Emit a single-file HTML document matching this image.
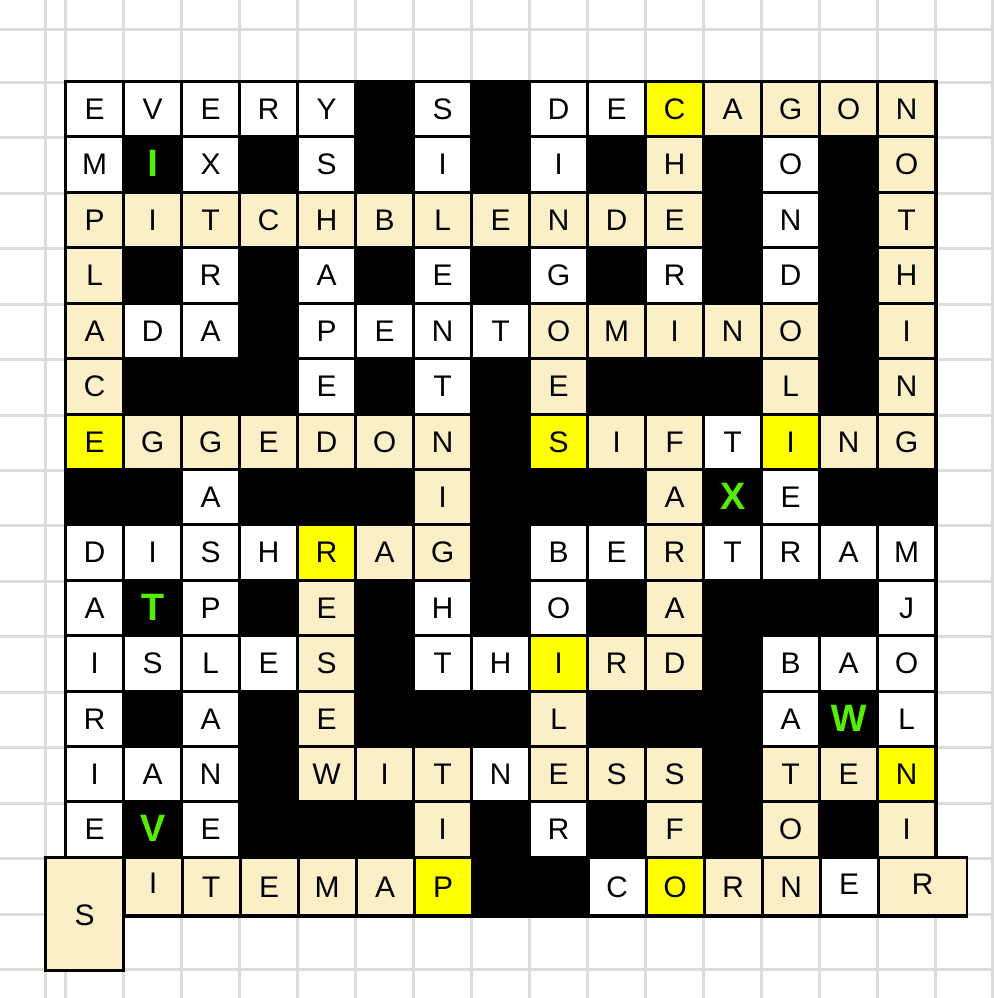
<!DOCTYPE html>
<html><head><meta charset="utf-8"><style>
html,body{margin:0;padding:0;background:#fff;}
body{width:994px;height:998px;position:relative;overflow:hidden;font-family:"Liberation Sans",Arial,sans-serif;}
.vl{position:absolute;top:0;width:3px;height:998px;background:#dcdcdc;}
.hl{position:absolute;left:0;height:3px;width:994px;background:#dcdcdc;}
#board{position:absolute;left:64px;top:80px;width:874px;height:779px;background:#000;}
#grid{position:absolute;left:3px;top:3px;display:grid;grid-template-columns:repeat(15,55px);grid-auto-rows:52.43px;column-gap:3px;row-gap:3px;}
#grid div,.c{font-size:30px;text-align:center;line-height:54px;color:#000;}
.w{background:#fff;}.b{background:#000;}.t{background:#fbefc7;}.y{background:#ffff00;}
#grid div.g{background:#000;color:#55ee00;font-weight:bold;font-size:38px;line-height:52px;}
.c{position:absolute;width:55px;height:55px;line-height:58px;}
</style></head><body>
<div class="vl" style="left:44px"></div>
<div class="vl" style="left:64px"></div><div class="vl" style="left:122px"></div><div class="vl" style="left:180px"></div><div class="vl" style="left:238px"></div><div class="vl" style="left:296px"></div><div class="vl" style="left:354px"></div><div class="vl" style="left:412px"></div><div class="vl" style="left:470px"></div><div class="vl" style="left:528px"></div><div class="vl" style="left:586px"></div><div class="vl" style="left:644px"></div><div class="vl" style="left:702px"></div><div class="vl" style="left:760px"></div><div class="vl" style="left:818px"></div><div class="vl" style="left:876px"></div><div class="vl" style="left:934px"></div><div class="vl" style="left:991px"></div>
<div class="hl" style="top:28px"></div><div class="hl" style="top:81px"></div><div class="hl" style="top:136px"></div><div class="hl" style="top:192px"></div><div class="hl" style="top:247px"></div><div class="hl" style="top:303px"></div><div class="hl" style="top:358px"></div><div class="hl" style="top:414px"></div><div class="hl" style="top:469px"></div><div class="hl" style="top:524px"></div><div class="hl" style="top:580px"></div><div class="hl" style="top:635px"></div><div class="hl" style="top:691px"></div><div class="hl" style="top:746px"></div><div class="hl" style="top:802px"></div><div class="hl" style="top:857px"></div><div class="hl" style="top:913px"></div><div class="hl" style="top:968px"></div>
<div id="board"><div id="grid">
<div class="w">E</div><div class="w">V</div><div class="w">E</div><div class="w">R</div><div class="w">Y</div><div class="b"></div><div class="w">S</div><div class="b"></div><div class="w">D</div><div class="w">E</div><div class="y">C</div><div class="t">A</div><div class="t">G</div><div class="t">O</div><div class="t">N</div>
<div class="w">M</div><div class="g">I</div><div class="w">X</div><div class="b"></div><div class="w">S</div><div class="b"></div><div class="w">I</div><div class="b"></div><div class="w">I</div><div class="b"></div><div class="t">H</div><div class="b"></div><div class="w">O</div><div class="b"></div><div class="t">O</div>
<div class="t">P</div><div class="t">I</div><div class="t">T</div><div class="t">C</div><div class="t">H</div><div class="t">B</div><div class="t">L</div><div class="t">E</div><div class="t">N</div><div class="t">D</div><div class="t">E</div><div class="b"></div><div class="w">N</div><div class="b"></div><div class="t">T</div>
<div class="t">L</div><div class="b"></div><div class="w">R</div><div class="b"></div><div class="w">A</div><div class="b"></div><div class="w">E</div><div class="b"></div><div class="w">G</div><div class="b"></div><div class="w">R</div><div class="b"></div><div class="w">D</div><div class="b"></div><div class="t">H</div>
<div class="t">A</div><div class="w">D</div><div class="w">A</div><div class="b"></div><div class="w">P</div><div class="w">E</div><div class="w">N</div><div class="w">T</div><div class="t">O</div><div class="t">M</div><div class="t">I</div><div class="t">N</div><div class="t">O</div><div class="b"></div><div class="t">I</div>
<div class="t">C</div><div class="b"></div><div class="b"></div><div class="b"></div><div class="w">E</div><div class="b"></div><div class="w">T</div><div class="b"></div><div class="t">E</div><div class="b"></div><div class="b"></div><div class="b"></div><div class="t">L</div><div class="b"></div><div class="t">N</div>
<div class="y">E</div><div class="t">G</div><div class="t">G</div><div class="t">E</div><div class="t">D</div><div class="t">O</div><div class="t">N</div><div class="b"></div><div class="y">S</div><div class="t">I</div><div class="t">F</div><div class="w">T</div><div class="y">I</div><div class="t">N</div><div class="t">G</div>
<div class="b"></div><div class="b"></div><div class="w">A</div><div class="b"></div><div class="b"></div><div class="b"></div><div class="t">I</div><div class="b"></div><div class="b"></div><div class="b"></div><div class="t">A</div><div class="g">X</div><div class="w">E</div><div class="b"></div><div class="b"></div>
<div class="w">D</div><div class="w">I</div><div class="w">S</div><div class="w">H</div><div class="y">R</div><div class="t">A</div><div class="t">G</div><div class="b"></div><div class="w">B</div><div class="w">E</div><div class="t">R</div><div class="w">T</div><div class="w">R</div><div class="w">A</div><div class="w">M</div>
<div class="w">A</div><div class="g">T</div><div class="w">P</div><div class="b"></div><div class="t">E</div><div class="b"></div><div class="w">H</div><div class="b"></div><div class="w">O</div><div class="b"></div><div class="t">A</div><div class="b"></div><div class="b"></div><div class="b"></div><div class="w">J</div>
<div class="w">I</div><div class="w">S</div><div class="w">L</div><div class="w">E</div><div class="t">S</div><div class="b"></div><div class="w">T</div><div class="w">H</div><div class="y">I</div><div class="t">R</div><div class="t">D</div><div class="b"></div><div class="w">B</div><div class="w">A</div><div class="w">O</div>
<div class="w">R</div><div class="b"></div><div class="w">A</div><div class="b"></div><div class="t">E</div><div class="b"></div><div class="b"></div><div class="b"></div><div class="t">L</div><div class="b"></div><div class="b"></div><div class="b"></div><div class="w">A</div><div class="g">W</div><div class="w">L</div>
<div class="w">I</div><div class="w">A</div><div class="w">N</div><div class="b"></div><div class="t">W</div><div class="t">I</div><div class="t">T</div><div class="w">N</div><div class="t">E</div><div class="t">S</div><div class="t">S</div><div class="b"></div><div class="t">T</div><div class="t">E</div><div class="y">N</div>
<div class="w">E</div><div class="g">V</div><div class="w">E</div><div class="b"></div><div class="b"></div><div class="b"></div><div class="t">I</div><div class="b"></div><div class="w">R</div><div class="b"></div><div class="t">F</div><div class="b"></div><div class="t">O</div><div class="b"></div><div class="t">I</div>
</div></div>
<div style="position:absolute;left:64px;top:856px;width:904px;height:62px;background:#000"></div>
<div style="position:absolute;left:44px;top:856px;width:81px;height:116px;background:#000"></div>
<div class="c t" style="left:47px;top:859px;width:75px;height:110px;line-height:114px">S</div>
<div class="c t" style="left:125.5px;top:859px;line-height:50px">I</div>
<div class="c t" style="left:183.5px;top:859px">T</div>
<div class="c t" style="left:241.5px;top:859px">E</div>
<div class="c t" style="left:299.5px;top:859px">M</div>
<div class="c t" style="left:357.5px;top:859px">A</div>
<div class="c y" style="left:415.5px;top:859px">P</div>
<div class="c w" style="left:589.5px;top:859px">C</div>
<div class="c y" style="left:647.5px;top:859px">O</div>
<div class="c t" style="left:705.5px;top:859px">R</div>
<div class="c t" style="left:763.5px;top:859px">N</div>
<div class="c w" style="left:821.5px;top:859px;line-height:52px">E</div>
<div class="c t" style="left:879.5px;top:859px;width:86px;line-height:52px">R</div>
</body></html>
